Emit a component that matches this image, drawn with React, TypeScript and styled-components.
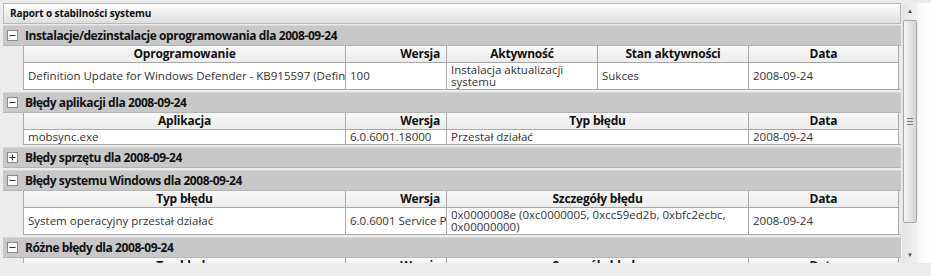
import React from 'react';
import styled, { createGlobalStyle } from 'styled-components';

const GlobalStyle = createGlobalStyle`
  html, body {
    margin: 0;
    padding: 0;
    background: #ececec;
  }
  body {
    font-family: 'Open Sans', 'Noto Sans', sans-serif;
    color: #1a1a1a;
  }
`;

type Column = { title: string; width: number; align?: 'left' | 'center' | 'right' };
type Row = { cells: React.ReactNode[]; height: number };
type Group = { title: string; open: boolean; columns: Column[]; rows: Row[] };

const errorCols: Column[] = [
  { title: 'Typ błędu', width: 322 },
  { title: 'Wersja', width: 101, align: 'right' },
  { title: 'Szczegóły błędu', width: 302 },
  { title: 'Data', width: 150 },
];

const groups: Group[] = [
  {
    title: 'Instalacje/dezinstalacje oprogramowania dla 2008-09-24',
    open: true,
    columns: [
      { title: 'Oprogramowanie', width: 322 },
      { title: 'Wersja', width: 101, align: 'right' },
      { title: 'Aktywność', width: 151 },
      { title: 'Stan aktywności', width: 151 },
      { title: 'Data', width: 150 },
    ],
    rows: [
      {
        height: 26,
        cells: [
          'Definition Update for Windows Defender - KB915597 (Definition 1.41.1234.0)',
          '100',
          <>
            Instalacja aktualizacji
            <br />
            systemu
          </>,
          'Sukces',
          '2008-09-24',
        ],
      },
    ],
  },
  {
    title: 'Błędy aplikacji dla 2008-09-24',
    open: true,
    columns: [
      { title: 'Aplikacja', width: 322 },
      { title: 'Wersja', width: 101, align: 'right' },
      { title: 'Typ błędu', width: 302 },
      { title: 'Data', width: 150 },
    ],
    rows: [{ height: 14, cells: ['mobsync.exe', '6.0.6001.18000', 'Przestał działać', '2008-09-24'] }],
  },
  { title: 'Błędy sprzętu dla 2008-09-24', open: false, columns: [], rows: [] },
  {
    title: 'Błędy systemu Windows dla 2008-09-24',
    open: true,
    columns: errorCols,
    rows: [
      {
        height: 26,
        cells: [
          'System operacyjny przestał działać',
          '6.0.6001 Service Pack 1',
          <>
            0x0000008e (0xc0000005, 0xcc59ed2b, 0xbfc2ecbc,
            <br />
            0x00000000)
          </>,
          '2008-09-24',
        ],
      },
    ],
  },
  {
    title: 'Różne błędy dla 2008-09-24',
    open: true,
    columns: errorCols,
    rows: [{ height: 14, cells: ['', '', '', ''] }],
  },
];

function ToggleBox({ open }: { open: boolean }) {
  return (
    <Toggle>
      <svg width="11" height="11" viewBox="0 0 11 11">
        <rect x="0.5" y="0.5" width="10" height="10" fill="#fbfbfb" stroke="#8a8a8a" />
        <line x1="2.5" y1="5.5" x2="8.5" y2="5.5" stroke="#333" />
        {!open && <line x1="5.5" y1="2.5" x2="5.5" y2="8.5" stroke="#333" />}
      </svg>
    </Toggle>
  );
}

export default function App() {
  return (
    <>
      <GlobalStyle />
      <Screen>
        <Report>
          <TitleBar>Raport o stabilności systemu</TitleBar>
          {groups.map((group) => (
            <React.Fragment key={group.title}>
              <GroupHeader>
                <ToggleBox open={group.open} />
                {group.title}
              </GroupHeader>
              {group.open && (
                <GroupBody>
                  <Table $cols={group.columns.map((c) => `${c.width}px`).join(' ')}>
                    {group.columns.map((col) => (
                      <HeadCell key={col.title} $align={col.align ?? 'center'}>
                        {col.title}
                      </HeadCell>
                    ))}
                    {group.rows.map((row, ri) =>
                      row.cells.map((cell, ci) => (
                        <DataCell key={`${ri}-${ci}`} $height={row.height}>
                          <span>{cell}</span>
                        </DataCell>
                      ))
                    )}
                  </Table>
                </GroupBody>
              )}
            </React.Fragment>
          ))}
        </Report>
        <ScrollBar>
          <Arrow>▲</Arrow>
          <Track>
            <Thumb>
              <Grip />
            </Thumb>
          </Track>
          <Arrow>▼</Arrow>
        </ScrollBar>
        <RightEdge />
      </Screen>
    </>
  );
}

const Screen = styled.div`
  width: 931px;
  height: 276px;
  display: flex;
  align-items: flex-start;
  padding-top: 3px;
  box-sizing: border-box;
  background: #ececec;
`;

const Report = styled.div`
  width: 898px;
  height: 260px;
  margin-left: 3px;
  overflow: hidden;
  display: flex;
  flex-direction: column;
  gap: 2px;
`;

const TitleBar = styled.div`
  flex: none;
  height: 21px;
  margin-bottom: -1px;
  box-sizing: border-box;
  border: 1px solid #b9b9b9;
  background: linear-gradient(#fdfdfd, #f0f0f0 45%, #dedede);
  font-size: 10px;
  font-weight: 700;
  letter-spacing: -0.1px;
  line-height: 19px;
  padding-left: 6px;
  color: #111;
`;

const GroupHeader = styled.div`
  flex: none;
  height: 21px;
  box-sizing: border-box;
  display: flex;
  align-items: center;
  gap: 7px;
  padding-left: 4px;
  background: #c8c8c8;
  border-top: 1px solid #d6d6d6;
  border-bottom: 1px solid #b4b4b4;
  font-size: 12px;
  font-weight: 700;
  letter-spacing: -0.42px;
  color: #111;
  white-space: nowrap;
`;

const Toggle = styled.span`
  display: flex;
  width: 11px;
  height: 11px;
`;

const GroupBody = styled.div`
  flex: none;
  margin-top: -2px;
  padding-left: 20px;
`;

const Table = styled.div<{ $cols: string }>`
  display: grid;
  grid-template-columns: ${(p) => p.$cols};
  border-left: 1px solid #a8a8a8;
  border-bottom: 1px solid #a8a8a8;
`;

const HeadCell = styled.div<{ $align: string }>`
  height: 17px;
  box-sizing: border-box;
  padding: 0 6px;
  border-right: 1px solid #a8a8a8;
  border-bottom: 1px solid #a8a8a8;
  background: linear-gradient(#f8f8f8, #ececec);
  font-size: 12px;
  font-weight: 700;
  letter-spacing: -0.2px;
  line-height: 16px;
  text-align: ${(p) => p.$align};
  white-space: nowrap;
  overflow: hidden;
  color: #111;
`;

const DataCell = styled.div<{ $height: number }>`
  height: ${(p) => p.$height}px;
  box-sizing: border-box;
  display: flex;
  align-items: center;
  padding: 0 4px;
  background: #fff;
  border-right: 1px solid #a8a8a8;
  font-size: 11.5px;
  line-height: 12px;
  color: #333;
  white-space: nowrap;
  overflow: hidden;
`;

const ScrollBar = styled.div`
  width: 16px;
  height: 260px;
  margin-left: 1px;
  display: flex;
  flex-direction: column;
  align-items: center;
  background: linear-gradient(90deg, #e4e4e4, #f2f2f2);
`;

const Arrow = styled.div`
  height: 16px;
  font-size: 6px;
  line-height: 16px;
  color: #444;
`;

const Track = styled.div`
  flex: 1;
  width: 100%;
  padding: 1px 1px 0;
  box-sizing: border-box;
`;

const Thumb = styled.div`
  height: 203px;
  box-sizing: border-box;
  border: 1px solid #a9a9a9;
  border-radius: 2px;
  background: linear-gradient(90deg, #f4f4f4, #e2e2e2 60%, #d4d4d4);
  display: flex;
  align-items: center;
  justify-content: center;
`;

const Grip = styled.div`
  width: 6px;
  height: 7px;
  background: repeating-linear-gradient(#7a7a7a 0 1px, transparent 1px 3px);
`;

const RightEdge = styled.div`
  width: 13px;
  height: 260px;
  background: linear-gradient(90deg, #f8f8f8, #ffffff);
`;
